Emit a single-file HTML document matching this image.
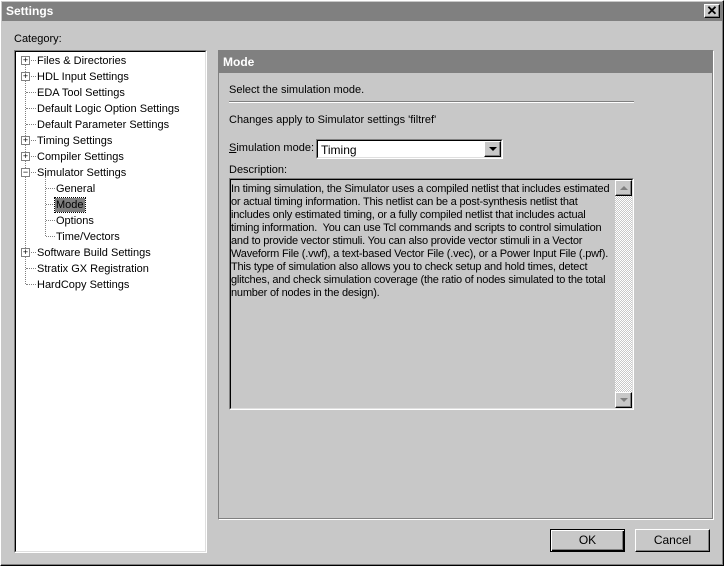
<!DOCTYPE html>
<html><head><style>
*{margin:0;padding:0;box-sizing:border-box}
body{width:724px;height:566px;background:#c8c8c8;font-family:"Liberation Sans",Arial,sans-serif;font-size:11px;color:#000;position:relative;overflow:hidden}
.a{position:absolute;white-space:nowrap}
.sunk{border-top:1px solid #808080;border-left:1px solid #808080;border-right:1px solid #fff;border-bottom:1px solid #fff}
.sunk2{border-top:1px solid #000;border-left:1px solid #000;border-right:1px solid #dfdfdf;border-bottom:1px solid #dfdfdf}
.btn{position:absolute;background:#c8c8c8;border-top:1px solid #fff;border-left:1px solid #fff;border-right:1px solid #000;border-bottom:1px solid #000;box-shadow:inset -1px -1px 0 #808080;text-align:center;font-size:12px}
.pb{position:absolute;width:9px;height:9px;border:1px solid #808080;background:#fff;font-size:9px;line-height:7px;text-align:center}
.dh{position:absolute;border-top:1px dotted #808080;width:7px;height:0}
.dv{position:absolute;border-left:1px dotted #808080;width:0}
.tri{position:absolute;left:4px;width:0;height:0;border-left:4px solid transparent;border-right:4px solid transparent}
</style></head><body>
<div class="a" style="left:0;top:0;width:724px;height:566px;border:1px solid #fff;border-right-color:#000;border-bottom-color:#000;box-shadow:inset -1px -1px 0 #808080"></div>
<div class="a" style="left:2px;top:2px;width:720px;height:19px;background:#808080;color:#fff;font-weight:bold;font-size:12px;padding:2px 0 0 4px">Settings</div>
<div class="btn" style="left:704px;top:4px;width:16px;height:14px;font-size:13px;font-weight:bold;line-height:11px">✕</div>
<div class="a" style="left:14px;top:33px">Category:</div>
<div class="a sunk" style="left:14px;top:50px;width:193px;height:503px"><div class="sunk2" style="width:100%;height:100%;background:#fff"></div></div>
<div class="dv" style="left:25px;top:64px;height:220px"></div>
<div class="dv" style="left:45px;top:176px;height:60px"></div>
<div id="tree"></div>
<div class="a" style="left:218px;top:50px;width:496px;height:470px;border:1px solid #808080;border-bottom-color:#fff;border-right-color:#fff;box-shadow:inset -1px -1px 0 #808080"></div>
<div class="a" style="left:219px;top:51px;width:494px;height:22px;background:#808080;color:#fff;font-weight:bold;font-size:12px;padding:4px 0 0 4px">Mode</div>
<div class="a" style="left:229px;top:84px">Select the simulation mode.</div>
<div class="a" style="left:229px;top:101px;width:405px;height:2px;border-top:1px solid #808080;border-bottom:1px solid #fff"></div>
<div class="a" style="left:229px;top:114px">Changes apply to Simulator settings 'filtref'</div>
<div class="a" style="left:229px;top:142px"><u>S</u>imulation mode:</div>
<div class="a sunk" style="left:316px;top:139px;width:187px;height:20px"><div class="sunk2" style="width:100%;height:100%;background:#fff;padding:2px 0 0 3px;font-size:12px">Timing</div></div>
<div class="btn" style="left:484px;top:141px;width:17px;height:16px"><div class="tri" style="top:5px;border-top:4px solid #000"></div></div>
<div class="a" style="left:229px;top:164px">Description:</div>
<div class="a sunk" style="left:229px;top:178px;width:405px;height:232px"><div class="sunk2" style="width:100%;height:100%;background:#c8c8c8"></div></div>
<div class="a" style="left:231px;top:183px;line-height:13px;white-space:pre;font-size:11px;letter-spacing:-0.2px">In timing simulation, the Simulator uses a compiled netlist that includes estimated
or actual timing information. This netlist can be a post-synthesis netlist that
includes only estimated timing, or a fully compiled netlist that includes actual
timing information.  You can use Tcl commands and scripts to control simulation
and to provide vector stimuli. You can also provide vector stimuli in a Vector
Waveform File (.vwf), a text-based Vector File (.vec), or a Power Input File (.pwf).
This type of simulation also allows you to check setup and hold times, detect
glitches, and check simulation coverage (the ratio of nodes simulated to the total
number of nodes in the design).</div>
<div class="a" style="left:615px;top:180px;width:17px;height:228px;background:repeating-conic-gradient(#fff 0 25%,#c8c8c8 0 50%) 0 0/2px 2px"></div>
<div class="btn" style="left:615px;top:180px;width:17px;height:16px"><div class="tri" style="top:5px;border-bottom:4px solid #808080"></div></div>
<div class="btn" style="left:615px;top:392px;width:17px;height:16px"><div class="tri" style="top:5px;border-top:4px solid #808080"></div></div>
<div class="btn" style="left:550px;top:529px;width:75px;height:23px;border:1px solid #000;box-shadow:inset 1px 1px 0 #fff,inset -1px -1px 0 #000,inset -2px -2px 0 #808080;line-height:20px">OK</div>
<div class="btn" style="left:635px;top:529px;width:75px;height:23px;line-height:20px">Cancel</div>
<script>
var items=[["Files & Directories",0,"+"],["HDL Input Settings",0,"+"],["EDA Tool Settings",0,""],["Default Logic Option Settings",0,""],["Default Parameter Settings",0,""],["Timing Settings",0,"+"],["Compiler Settings",0,"+"],["Simulator Settings",0,"−"],["General",1,""],["Mode",1,"s"],["Options",1,""],["Time/Vectors",1,""],["Software Build Settings",0,"+"],["Stratix GX Registration",0,""],["HardCopy Settings",0,""]];
var h="";
items.forEach(function(it,i){var y=60+i*16;var x=it[1]?56:37;
var lx=it[1]?46:26;
h+='<div class="dh" style="left:'+lx+'px;top:'+y+'px;width:'+(x-lx-1)+'px"></div>';
if(it[2]=="+"||it[2]=="−")h+='<div class="pb" style="left:21px;top:'+(y-4)+'px">'+it[2]+'</div>';
var st=it[2]=="s"?'background:#808080;color:#000;outline:1px dotted #000;padding:0 1px;':'padding:0 1px;';
h+='<div class="a" style="left:'+(x-1)+'px;top:'+(y-6)+'px;'+st+'line-height:14px">'+it[0].replace("&","&amp;")+'</div>';});
document.getElementById("tree").innerHTML=h;
</script>
</body></html>
